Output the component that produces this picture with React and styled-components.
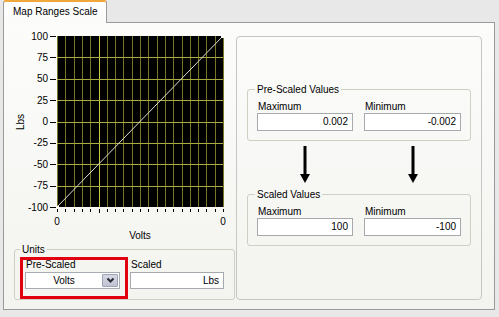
import React from "react";
import styled, { createGlobalStyle } from "styled-components";

const GlobalStyle = createGlobalStyle`
  html, body {
    margin: 0;
    padding: 0;
    background: #e8e8e8;
  }
  body {
    font-family: "Liberation Sans", Arial, sans-serif;
    font-size: 10px;
    color: #000;
  }
`;

const Window = styled.div`
  width: 499px;
  height: 317px;
  box-sizing: border-box;
  padding: 0 4px 0 3px;
  overflow: hidden;
`;

const TabStrip = styled.div`
  display: flex;
  align-items: flex-start;
  height: 22px;
`;

const Tab = styled.div`
  position: relative;
  z-index: 1;
  box-sizing: border-box;
  width: 104px;
  height: 23px;
  padding: 4px 0 0 9px;
  border: 1px solid #9c9c9c;
  border-top: 2px solid #f0a83a;
  border-bottom: none;
  border-radius: 3px 3px 0 0;
  background: linear-gradient(#ffffff, #fbfbf9);
  line-height: 12px;
  white-space: nowrap;
`;

const Panel = styled.div`
  display: flex;
  gap: 1px;
  box-sizing: border-box;
  height: 288px;
  padding: 6px 12px 9px 9px;
  border: 1px solid #9a9a9a;
  background: linear-gradient(#fcfcfb, #f3f3ef);
`;

const LeftColumn = styled.div`
  display: flex;
  flex-direction: column;
  width: 222px;
`;

const ChartSvg = styled.svg`
  display: block;
  font-family: "Liberation Sans", Arial, sans-serif;
  font-size: 10px;
`;

const Group = styled.fieldset`
  margin: 0;
  border: 1px solid #cfcfc4;
  border-radius: 3px;
  padding: ${(p) => p.$pad || "5px 9px 9px"};
  min-width: 0;
`;

const Legend = styled.legend`
  padding: 0 2px;
  margin-left: ${(p) => p.$shift || "0"};
  line-height: 13px;
`;

const UnitsGroup = styled(Group)`
  width: 221px;
  height: 57px;
  box-sizing: border-box;
  margin-left: 1px;
`;

const UnitsRow = styled.div`
  display: flex;
  gap: 2px;
  margin-top: 1px;
`;

const RedFrame = styled.div`
  box-sizing: border-box;
  width: 108px;
  height: 42px;
  border: 3px solid #e3000e;
  padding: 0 0 0 2px;
`;

const Control = styled.div`
  display: flex;
  flex-direction: column;
  padding-top: ${(p) => p.$top || "0"};
`;

const SmallLabel = styled.div`
  line-height: 9px;
  padding-left: 1px;
  margin-bottom: 3px;
`;

const Select = styled.div`
  display: flex;
  align-items: center;
  box-sizing: border-box;
  width: 95px;
  height: 17px;
  border: 1px solid #a7abb3;
  background: #fff;
`;

const SelectText = styled.div`
  flex: 1;
  text-align: center;
  line-height: 15px;
`;

const SelectButton = styled.div`
  display: flex;
  align-items: center;
  justify-content: center;
  box-sizing: border-box;
  width: 16px;
  height: 13px;
  margin-right: 1px;
  border: 1px solid #9ea2b6;
  border-radius: 1px;
  background: linear-gradient(#d6d8e4, #c0c3d3);
`;

const Field = styled.div`
  box-sizing: border-box;
  width: ${(p) => p.$w || "96px"};
  height: ${(p) => p.$h || "18px"};
  border: 1px solid #a6a9ae;
  background: #fff;
  padding-right: 4px;
  text-align: right;
  line-height: ${(p) => (p.$h === "17px" ? "15px" : "16px")};
`;

const RightPanel = styled.div`
  box-sizing: border-box;
  width: 246px;
  height: 264px;
  margin-top: 7px;
  padding: 46px 10px 0;
  border: 1px solid #c6c6c6;
  border-radius: 4px;
`;

const PairGrid = styled.div`
  display: grid;
  grid-template-columns: 96px 97px;
  column-gap: 11px;
`;

const ValueLabel = styled.div`
  line-height: 12px;
  padding-left: 1px;
`;

const ArrowRow = styled(PairGrid)`
  height: 47px;
  padding: 0 10px;
  justify-items: center;
`;

const ArrowSvg = styled.svg`
  display: block;
  margin-top: 5px;
`;

const plot = { L: 44, R: 210, T: 7, B: 178 };

function Chart() {
  const { L, R, T, B } = plot;
  const vx = (i) => L + (i * (R - L)) / 20;
  const vy = (v) => T + ((100 - v) / 200) * (B - T);
  const yVals = [100, 75, 50, 25, 0, -25, -50, -75, -100];
  const cols = Array.from({ length: 21 }, (_, i) => i);

  return (
    <ChartSvg width="222" height="214" viewBox="0 0 222 214">
      <rect x={L} y={T} width={R - L} height={B - T} fill="#000" />
      {cols.map((i) => (
        <line
          key={"v" + i}
          x1={Math.round(vx(i)) + 0.5}
          x2={Math.round(vx(i)) + 0.5}
          y1={T}
          y2={B}
          stroke={i === 5 ? "#c9c83e" : "#77772a"}
          strokeWidth="1"
        />
      ))}
      {yVals.slice(1, -1).map((v) => (
        <line
          key={"h" + v}
          x1={L}
          x2={R}
          y1={Math.round(vy(v)) + 0.5}
          y2={Math.round(vy(v)) + 0.5}
          stroke="#acac44"
          strokeWidth="1"
        />
      ))}
      <line x1={L} y1={B} x2={R} y2={T} stroke="#deded2" strokeWidth="1" />
      <rect x={L - 1} y={B - 1} width="3" height="3" fill="#fff" />
      <rect x={R - 2} y={T - 1} width="3" height="3" fill="#fff" />

      {yVals.map((v) => (
        <g key={"y" + v}>
          <text x="35" y={vy(v) + 3.5} textAnchor="end">
            {v}
          </text>
          <line
            x1="37"
            x2="43"
            y1={Math.round(vy(v)) + 0.5}
            y2={Math.round(vy(v)) + 0.5}
            stroke="#000"
          />
        </g>
      ))}

      {cols.map((i) => (
        <line
          key={"t" + i}
          x1={Math.round(vx(i)) + 0.5}
          x2={Math.round(vx(i)) + 0.5}
          y1={B + 2}
          y2={i === 5 ? B + 6 : B + 5}
          stroke="#000"
        />
      ))}
      <text x={L} y="196" textAnchor="middle">0</text>
      <text x={R} y="196" textAnchor="middle">0</text>
      <text x={(L + R) / 2} y="210" textAnchor="middle">Volts</text>
      <text transform="translate(11,93) rotate(-90)" textAnchor="middle">
        Lbs
      </text>
    </ChartSvg>
  );
}

function DownArrow() {
  return (
    <ArrowSvg width="10" height="37" viewBox="0 0 10 37">
      <rect x="3.5" y="0" width="3" height="29" fill="#000" />
      <polygon points="0,28 10,28 5,37" fill="#000" />
    </ArrowSvg>
  );
}

function ValuePair({ title, max, min }) {
  return (
    <Group>
      <Legend $shift="-2px">{title}</Legend>
      <PairGrid>
        <ValueLabel>Maximum</ValueLabel>
        <ValueLabel>Minimum</ValueLabel>
        <Field>{max}</Field>
        <Field $w="97px">{min}</Field>
      </PairGrid>
    </Group>
  );
}

export default function App() {
  return (
    <>
      <GlobalStyle />
      <Window>
        <TabStrip>
          <Tab>Map Ranges Scale</Tab>
        </TabStrip>
        <Panel>
          <LeftColumn>
            <Chart />
            <UnitsGroup $pad="0 5px">
              <Legend>Units</Legend>
              <UnitsRow>
                <RedFrame>
                  <Control>
                    <SmallLabel>Pre-Scaled</SmallLabel>
                    <Select>
                      <SelectText>Volts</SelectText>
                      <SelectButton>
                        <svg width="9" height="7" viewBox="0 0 9 7">
                          <polyline
                            points="1.5,1.5 4.5,4.5 7.5,1.5"
                            fill="none"
                            stroke="#2b2b35"
                            strokeWidth="2"
                          />
                        </svg>
                      </SelectButton>
                    </Select>
                  </Control>
                </RedFrame>
                <Control $top="3px">
                  <SmallLabel>Scaled</SmallLabel>
                  <Field $w="94px" $h="17px">Lbs</Field>
                </Control>
              </UnitsRow>
            </UnitsGroup>
          </LeftColumn>
          <RightPanel>
            <ValuePair title="Pre-Scaled Values" max="0.002" min="-0.002" />
            <ArrowRow>
              <DownArrow />
              <DownArrow />
            </ArrowRow>
            <ValuePair title="Scaled Values" max="100" min="-100" />
          </RightPanel>
        </Panel>
      </Window>
    </>
  );
}
